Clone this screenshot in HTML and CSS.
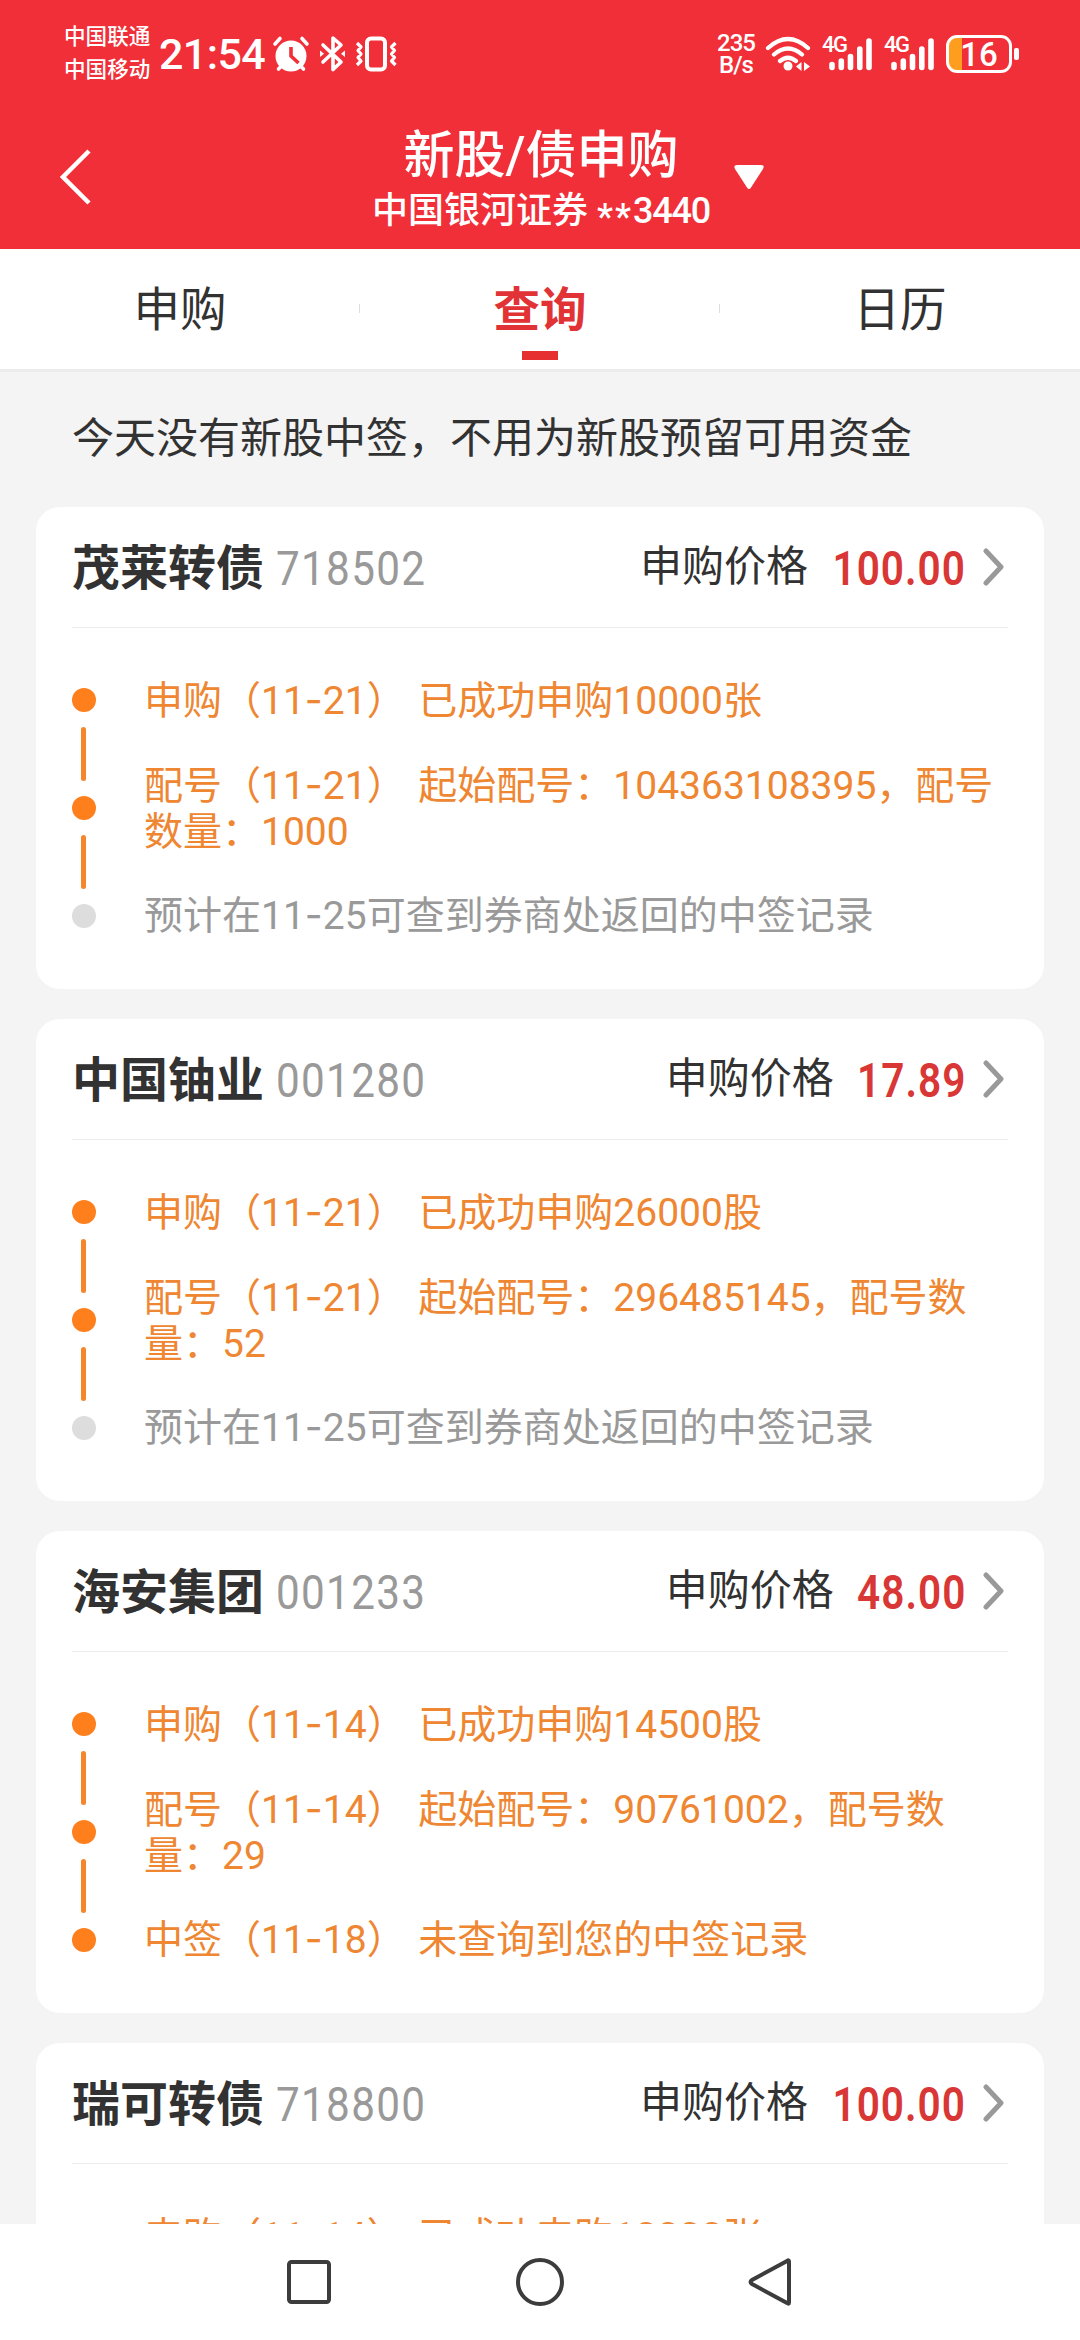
FILE: index.html
```html
<!DOCTYPE html>
<html lang="zh-CN">
<head>
<meta charset="utf-8">
<title>新股/债申购</title>
<link rel="stylesheet" href="styles.css">
</head>
<body>
<div class="screen">
  <header class="header">
    <div class="status">
      <div class="carriers"><span>中国联通</span><span>中国移动</span></div>
      <div class="clock">21:54</div>
      <svg class="status-left" width="128" height="40" viewBox="271 34 128 40" fill="none" stroke="#fff">
        <circle cx="291" cy="56" r="15.5" fill="#fff" stroke="none"/>
        <path d="M275 44l5-5.500M307 44l-5-5.500M278.500 69l4-4M303.500 69l-4-4" stroke-width="3.600" stroke-linecap="round"/>
        <path d="M291 47v9l7.500 7" stroke="#f12f38" stroke-width="3.600"/>
        <path d="M323 45l18 17-8 7.500V56M333 52V38l8 7-18 17" stroke-width="3.600" stroke-linejoin="round" stroke-linecap="round"/>
        <path d="M320 50.500v6.500l4-3.250zM345 50.500v6.500l-4-3.250z" fill="#fff" stroke="none"/>
        <rect x="367" y="38.500" width="18" height="31" rx="4" stroke-width="4"/>
        <path d="M357 43l4 4-3 3.500 3 3.500-3 3.500 3 3.500-4 4M395.500 43l-4 4 3 3.500-3 3.500 3 3.500-3 3.500 4 4" stroke-width="3.200" stroke-linejoin="round"/>
      </svg>
      <div class="spacer"></div>
      <div class="speed"><span>235</span><span>B/s</span></div>
      <svg class="wifi" width="46" height="38" viewBox="764 35 46 38" fill="none" stroke="#fff" stroke-width="4.200" stroke-linecap="round">
        <path d="M767 48Q787 30 807 48M773 54.500Q787 42.500 801 54.500M779 61Q787 54.500 795 61"/>
        <circle cx="787" cy="66" r="4.500" fill="#fff" stroke="none"/>
        <path d="M795 66.500l5.500-4.500v9zM809 66.500l-6-4.500v9z" fill="#fff" stroke="none"/>
      </svg>
      <div class="signal"><span>4G</span>
        <svg width="44" height="36" viewBox="828 36 44 36" stroke="#fff" stroke-width="5.600" stroke-linecap="round"><path d="M831 64.500v3M840.300 61v6.500M849.500 56.500v11M858.800 49v18.500M868 41v26.500"/></svg>
      </div>
      <div class="signal"><span>4G</span>
        <svg width="44" height="36" viewBox="828 36 44 36" stroke="#fff" stroke-width="5.600" stroke-linecap="round"><path d="M831 64.500v3M840.300 61v6.500M849.500 56.500v11M858.800 49v18.500M868 41v26.500"/></svg>
      </div>
      <div class="battery"><div class="battery-body">16</div><i></i></div>
    </div>
    <div class="titlebar">
      <svg class="back" width="34" height="58" viewBox="0 0 34 58" fill="none" stroke="#fff" stroke-width="4.500"><path d="M31 3L5 29l26 26"/></svg>
      <div class="titles">
        <h1>新股/债申购</h1>
        <p>中国银河证券 <span class="stars">**</span><span class="account">3440</span></p>
      </div>
      <svg class="drop" width="30" height="24" viewBox="0 0 30 24"><path d="M3 0h24q4 0 2 4L17 22.500q-2 3-4 0L1 4Q-1 0 3 0z" fill="#fff"/></svg>
    </div>
  </header>

  <nav class="tabs">
    <div class="tab">申购</div>
    <div class="tab active">查询</div>
    <div class="tab">日历</div>
  </nav>

  <main class="content">
    <p class="notice">今天没有新股中签，不用为新股预留可用资金</p>

    <section class="card">
      <div class="card-head">
        <h2>茂莱转债</h2><span class="code">718502</span>
        <span class="label">申购价格</span><span class="price">100.00</span>
        <svg class="chev" width="22" height="38" viewBox="0 0 22 38"><path d="M3 3l15 16L3 35"/></svg>
      </div>
      <div class="card-body">
        <div class="track"><b></b><i></i><b></b><i></i><b class="off"></b></div>
        <div class="steps">
          <p>申购（11<s>-</s>21） 已成功申购10000张</p>
          <p>配号（11<s>-</s>21） 起始配号：104363108395，配号数量：1000</p>
          <p class="pending">预计在11<s>-</s>25可查到券商处返回的中签记录</p>
        </div>
      </div>
    </section>

    <section class="card">
      <div class="card-head">
        <h2>中国铀业</h2><span class="code">001280</span>
        <span class="label">申购价格</span><span class="price short">17.89</span>
        <svg class="chev" width="22" height="38" viewBox="0 0 22 38"><path d="M3 3l15 16L3 35"/></svg>
      </div>
      <div class="card-body">
        <div class="track"><b></b><i></i><b></b><i></i><b class="off"></b></div>
        <div class="steps">
          <p>申购（11<s>-</s>21） 已成功申购26000股</p>
          <p>配号（11<s>-</s>21） 起始配号：296485145，配号数量：52</p>
          <p class="pending">预计在11<s>-</s>25可查到券商处返回的中签记录</p>
        </div>
      </div>
    </section>

    <section class="card">
      <div class="card-head">
        <h2>海安集团</h2><span class="code">001233</span>
        <span class="label">申购价格</span><span class="price short">48.00</span>
        <svg class="chev" width="22" height="38" viewBox="0 0 22 38"><path d="M3 3l15 16L3 35"/></svg>
      </div>
      <div class="card-body">
        <div class="track"><b></b><i></i><b></b><i></i><b></b></div>
        <div class="steps">
          <p>申购（11<s>-</s>14） 已成功申购14500股</p>
          <p>配号（11<s>-</s>14） 起始配号：90761002，配号数量：29</p>
          <p>中签（11<s>-</s>18） 未查询到您的中签记录</p>
        </div>
      </div>
    </section>

    <section class="card">
      <div class="card-head">
        <h2>瑞可转债</h2><span class="code">718800</span>
        <span class="label">申购价格</span><span class="price">100.00</span>
        <svg class="chev" width="22" height="38" viewBox="0 0 22 38"><path d="M3 3l15 16L3 35"/></svg>
      </div>
      <div class="card-body">
        <div class="track"><b></b></div>
        <div class="steps">
          <p>申购（11<s>-</s>14） 已成功申购10000张</p>
        </div>
      </div>
    </section>
  </main>

  <footer class="sysnav">
    <svg width="50" height="50" viewBox="0 0 50 50"><rect x="5" y="5" width="40" height="40" rx="2.500"/></svg>
    <svg width="50" height="50" viewBox="0 0 50 50"><circle cx="25" cy="25" r="22"/></svg>
    <svg width="50" height="50" viewBox="0 0 50 50"><path d="M43 4.500v41q0 2-2 .500L6 27q-3-2 0-4L41 4q2-1.500 2 .500z"/></svg>
  </footer>
</div>
</body>
</html>
```

FILE: styles.css
```css
* { box-sizing: border-box; margin: 0; padding: 0; }
body { background: #f4f4f4; font-family: Roboto, "Noto Sans CJK SC", sans-serif; color: #323232; }
.screen { width: 1080px; height: 2340px; display: flex; flex-direction: column; overflow: hidden; }
svg { flex: none; display: block; }

.header { height: 249px; flex: none; background: #f12f38; color: #fff; }
.status { height: 108px; display: flex; align-items: center; padding: 0 61px 0 64px; }
.spacer { flex: 1; }
.carriers { display: flex; flex-direction: column; font-size: 21.600px; line-height: 33px; width: 95px; font-weight: 500; padding-bottom: 2px; }
.clock { width: 112px; font-size: 43px; font-weight: 500; letter-spacing: -.6px; }
.speed { display: flex; flex-direction: column; align-items: center; font-size: 24px; line-height: 22px; font-weight: 500; width: 38px; margin-right: 10px; letter-spacing: -1px; }
.wifi { margin-right: 11px; }
.signal { width: 62px; display: flex; align-items: flex-start; }
.signal span { font-size: 22px; line-height: 18px; font-weight: 500; letter-spacing: -1.500px; width: 7px; white-space: nowrap; }
.battery { display: flex; align-items: center; gap: 2px; }
.battery-body { width: 66px; height: 38px; border: 3px solid #fff; border-radius: 11px; background: linear-gradient(90deg, #ff9d1e 13px, transparent 13px); font-size: 33px; line-height: 33px; font-weight: 500; text-align: center; }
.battery i { width: 5px; height: 12px; border-radius: 2px; background: #fff; }

.titlebar { height: 141px; display: flex; align-items: center; }
.back { margin: 0 0 4px 58px; }
.titles { width: 454px; margin-left: 222px; margin-right: -34px; text-align: center; padding-top: 5px; }
.titles h1 { font-size: 51px; font-weight: 500; line-height: 60px; }
.titles p { font-size: 36px; font-weight: 500; line-height: 50px; white-space: nowrap; }
.stars { display: inline-block; line-height: 30px; vertical-align: -6px; letter-spacing: 2px; }
.account { letter-spacing: -1.200px; }
.drop { margin-bottom: 4px; }

.tabs { height: 123px; flex: none; background: #fff; border-bottom: 3px solid #ececec; display: grid; grid-template-columns: repeat(3, 1fr); }
.tab { position: relative; font-size: 46.500px; line-height: 122px; height: 120px; text-align: center; }
.tab + .tab::before { content: ""; position: absolute; left: -1px; top: 55px; width: 1px; height: 9px; background: #ddd; }
.active { color: #e13336; font-weight: 700; }
.active::after { content: ""; position: absolute; left: 162px; top: 102px; width: 36px; height: 9px; background: #e52f30; }

.content { flex: 1; min-height: 0; overflow: hidden; padding: 0 36px; }
.notice { height: 135px; line-height: 134px; font-size: 42px; padding-left: 36px; }
.card { height: 482px; margin-bottom: 30px; padding: 0 36px; background: #fff; border-radius: 24px; }
.card-head { height: 121px; display: flex; align-items: center; border-bottom: 1px solid #ececec; }
.card-head h2 { font-size: 48px; line-height: 70px; padding-top: 4px; font-weight: 700; }
.code { font-size: 48px; letter-spacing: 1.500px; color: #999; margin-left: 12px; padding-top: 2px; transform: scaleX(.88); transform-origin: left; }
.label { font-size: 42px; line-height: 60px; margin-left: auto; }
.price { font-size: 48px; font-weight: 600; letter-spacing: 1.200px; color: #d93636; padding-top: 2px; transform: scaleX(.845); transform-origin: right; }
.price.short { margin-left: 3px; }
.chev { margin-left: 17px; margin-right: 3px; fill: none; stroke: #999; stroke-width: 5; stroke-linecap: round; stroke-linejoin: round; }

.card-body { display: flex; }
.track { width: 72px; padding-top: 60px; display: flex; flex-direction: column; align-items: flex-start; gap: 15px; }
.track b { width: 24px; height: 24px; border-radius: 50%; background: #ff7f1c; }
.track i { width: 5px; height: 54px; margin-left: 9px; border-radius: 3px; background: #f5862b; }
.track .off { background: #ddd; }
.steps { flex: 1; padding-top: 50px; display: flex; flex-direction: column; gap: 38.500px; font-size: 39px; line-height: 46px; color: #ee8632; word-spacing: 3px; }
.steps s { font-family: Inter, sans-serif; text-decoration: none; line-height: 1; }
.steps .pending { color: #999; }

.sysnav { height: 116px; flex: none; background: #fff; display: flex; justify-content: center; gap: 181px; padding-top: 33px; }
.sysnav svg { fill: none; stroke: #3c3c3c; stroke-width: 4; }
```
